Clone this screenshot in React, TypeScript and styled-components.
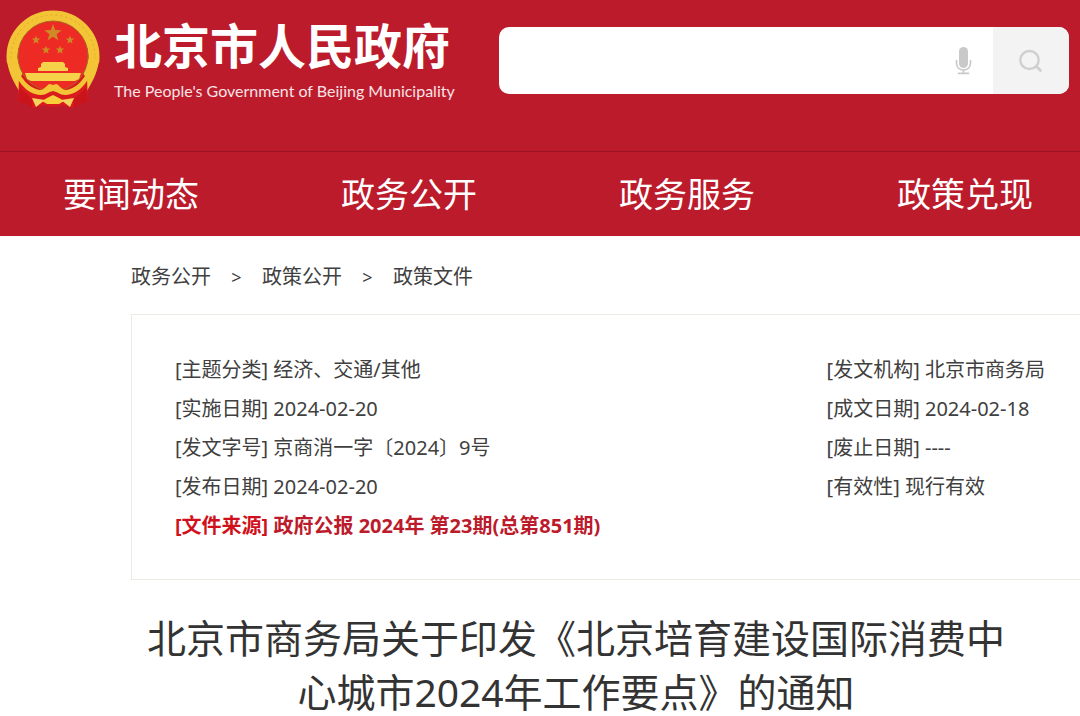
import React from "react";
import styled, { createGlobalStyle } from "styled-components";

const red = "#bc1b2c";

const GlobalStyle = createGlobalStyle`
  * { box-sizing: border-box; }
  body {
    margin: 0;
    background: #fff;
    color: #404040;
    font-family: "Noto Sans", "Noto Sans CJK SC", sans-serif;
    font-size: 20px;
  }
  a { color: inherit; text-decoration: none; }
  ul, ol { margin: 0; padding: 0; list-style: none; }
`;

const Page = styled.div`
  overflow: hidden;
`;

const Header = styled.header`
  background: ${red};
  color: #fff;
`;

const Banner = styled.div`
  display: flex;
  justify-content: space-between;
  align-items: flex-start;
  gap: 40px;
  padding: 8px 11px 43px 4px;
`;

const Brand = styled.a`
  display: flex;
  flex: none;
  gap: 10px;
  height: 100px;
`;

const BrandText = styled.span`
  display: flex;
  flex-direction: column;
  padding-top: 12px;
`;

const BrandName = styled.strong`
  font-size: 48px;
  line-height: 52px;
  font-weight: 700;
`;

const BrandSub = styled.span`
  font-size: 16px;
  line-height: 24px;
  margin-top: 7px;
  font-family: Lato, "Noto Sans", sans-serif;
  color: #f8e3e6;
`;

const Search = styled.form`
  display: flex;
  flex: 0 1 570px;
  height: 67px;
  margin-top: 19px;
  background: #fff;
  border-radius: 10px;
  overflow: hidden;
`;

const SearchInput = styled.input`
  flex: 1;
  min-width: 0;
  padding: 0 16px;
  border: 0;
  outline: 0;
  background: transparent;
  font: inherit;
`;

const IconButton = styled.button<{ $filled?: boolean }>`
  display: flex;
  align-items: center;
  justify-content: center;
  width: ${(p) => (p.$filled ? 76 : 60)}px;
  padding: 0;
  border: 0;
  background: ${(p) => (p.$filled ? "#f3f3f3" : "transparent")};
`;

const Nav = styled.nav`
  border-top: 1px solid #9c1424;
`;

const NavList = styled.ul`
  display: flex;
  justify-content: space-between;
  padding: 0 47px 0 63px;
`;

const NavLink = styled.a`
  display: block;
  font-size: 34px;
  line-height: 84px;
`;

const Content = styled.main`
  padding-left: 131px;
`;

const Crumbs = styled.ol`
  display: flex;
  padding: 26px 0 22px;
  line-height: 30px;
`;

const Crumb = styled.li`
  & + &::before {
    content: ">";
    display: inline-block;
    width: 51px;
    text-align: center;
    font-size: 18px;
  }
`;

const MetaBox = styled.section`
  display: grid;
  grid-template-columns: 18fr 7fr;
  padding: 35px 0 34px 43px;
  border: 1px solid #ecebe3;
  border-right: 0;
`;

const MetaRow = styled.li<{ $strong?: boolean }>`
  line-height: 39px;
  white-space: nowrap;
  font-weight: ${(p) => (p.$strong ? 700 : 400)};
  color: ${(p) => (p.$strong ? "#d0111b" : "inherit")};
`;

const SourceLink = styled.a`
  color: ${red};
`;

const Title = styled.h1`
  margin: 31px 72px 0 13px;
  font-size: 39px;
  line-height: 54px;
  font-weight: 400;
  text-align: center;
  color: #333;
`;

const star = (cx: number, cy: number, r: number) =>
  Array.from({ length: 10 }, (_, i) => {
    const a = (Math.PI / 5) * i - Math.PI / 2;
    const d = i % 2 ? r * 0.42 : r;
    return `${(cx + d * Math.cos(a)).toFixed(1)},${(cy + d * Math.sin(a)).toFixed(1)}`;
  }).join(" ");

const Emblem = () => (
  <svg width="100" height="104" viewBox="4 8 100 104" aria-hidden="true">
    <circle cx="53" cy="57" r="41" fill="none" stroke="#f3c436" strokeWidth="11" />
    <circle cx="53" cy="57" r="42" fill="none" stroke="#dfaa2c" strokeWidth="1" strokeDasharray="2 3" />
    <path d="M7 62 L19 93 L19 112 H4 V62 Z M99 62 L87 93 L87 112 H104 V62 Z" fill={red} />
    <path d="M7 57 C7 69 12 79 19 91 L25 84 L19 60 Z M99 57 C99 69 94 79 87 91 L81 84 L87 60 Z" fill="#f3c436" />
    <path d="M19 79 L24 72 H82 L87 79 L88 101 L80 104 L73 108 L62 105 L53 107 L44 105 L33 108 L26 104 L18 101 Z" fill="#da1b1d" />
    <path d="M18 101 L20 88 L32 99 L33 108 L26 104 Z M88 101 L86 88 L74 99 L73 108 L80 104 Z" fill="#c9141b" />
    <circle cx="53" cy="56" r="35" fill="#ed2b24" stroke="#a96820" strokeWidth="1" />
    <path d="M17 72 L21 76 C26 84 33 89 40 90 C45 90 47 84 50 84 L53 85 L56 84 C59 84 61 90 66 90 C73 89 80 84 85 76 L89 72 L87 81 C81 90 73 95 65 95 C60 95 56 91 53 91 C50 91 46 95 41 95 C33 95 25 90 19 81 Z" fill="#f3c436" />
    <path d="M41 64 L43 62 H63 L65 64 V67 L68 68 V71 H38 V68 L41 67 Z" fill="#f6d14a" />
    <path d="M25 73 H81 L79 79 L75 81 H31 L27 79 Z" fill="#f6d14a" />
    <path d="M42 101 L47 98 L53 95 L59 98 L64 101 L59 104 H47 Z" fill="#f7cf3a" />
    <path d="M32 98 L45 100 L36 107 Z M74 98 L61 100 L70 107 Z" fill="#f4d260" />
    <g fill="#cf8a26">
      <polygon points={star(53, 33, 9)} />
      <polygon points={star(36, 40, 4.5)} />
      <polygon points={star(70, 40, 4.5)} />
      <polygon points={star(46, 50, 4.5)} />
      <polygon points={star(60, 50, 4.5)} />
    </g>
  </svg>
);

const MicIcon = () => (
  <svg width="18" height="30" viewBox="0 0 18 30" aria-hidden="true">
    <rect x="5" y="1" width="9" height="21" rx="4.5" fill="#c9c9c9" />
    <path d="M2.5 14.5 V17 C2.5 21.5 5.5 24 9.5 24 S16.5 21.5 16.5 17 V14.5 M9.5 24 V27 M4.5 27.3 H14.5" fill="none" stroke="#c9c9c9" strokeWidth="1.7" strokeLinecap="round" />
  </svg>
);

const SearchIcon = () => (
  <svg width="26" height="26" viewBox="0 0 26 26" aria-hidden="true">
    <ellipse cx="11.5" cy="12" rx="9.2" ry="9" fill="none" stroke="#cfcfcf" strokeWidth="2.4" />
    <path d="M18.5 18.5 L22.5 22.5" stroke="#cfcfcf" strokeWidth="2.8" strokeLinecap="round" />
  </svg>
);

const navItems = ["要闻动态", "政务公开", "政务服务", "政策兑现"];
const crumbs = ["政务公开", "政策公开", "政策文件"];
const leftMeta = [
  "[主题分类] 经济、交通/其他",
  "[实施日期] 2024-02-20",
  "[发文字号] 京商消一字〔2024〕9号",
  "[发布日期] 2024-02-20",
];
const rightMeta = [
  "[发文机构] 北京市商务局",
  "[成文日期] 2024-02-18",
  "[废止日期] ----",
  "[有效性] 现行有效",
];

export default function App() {
  return (
    <Page lang="zh-CN">
      <GlobalStyle />
      <Header>
        <Banner>
          <Brand href="#">
            <Emblem />
            <BrandText>
              <BrandName>北京市人民政府</BrandName>
              <BrandSub>The People's Government of Beijing Municipality</BrandSub>
            </BrandText>
          </Brand>
          <Search role="search">
            <SearchInput type="text" aria-label="搜索" />
            <IconButton type="button" aria-label="语音输入">
              <MicIcon />
            </IconButton>
            <IconButton type="submit" aria-label="搜索" $filled>
              <SearchIcon />
            </IconButton>
          </Search>
        </Banner>
        <Nav>
          <NavList>
            {navItems.map((item) => (
              <li key={item}>
                <NavLink href="#">{item}</NavLink>
              </li>
            ))}
          </NavList>
        </Nav>
      </Header>
      <Content>
        <Crumbs>
          {crumbs.map((item) => (
            <Crumb key={item}>
              <a href="#">{item}</a>
            </Crumb>
          ))}
        </Crumbs>
        <MetaBox>
          <ul>
            {leftMeta.map((row) => (
              <MetaRow key={row}>{row}</MetaRow>
            ))}
            <MetaRow $strong>
              [文件来源] <SourceLink href="#">政府公报 2024年 第23期(总第851期)</SourceLink>
            </MetaRow>
          </ul>
          <ul>
            {rightMeta.map((row) => (
              <MetaRow key={row}>{row}</MetaRow>
            ))}
          </ul>
        </MetaBox>
        <Title>北京市商务局关于印发《北京培育建设国际消费中心城市2024年工作要点》的通知</Title>
      </Content>
    </Page>
  );
}
